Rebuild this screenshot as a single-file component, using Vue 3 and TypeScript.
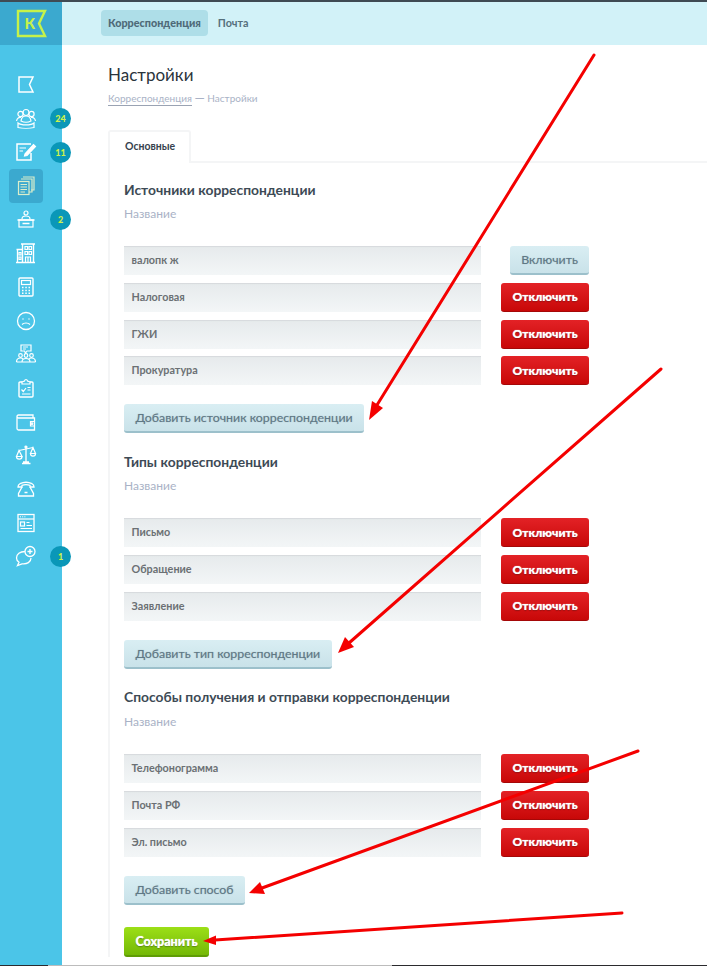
<script setup lang="ts">
interface Row { name: string; on: boolean }
interface Section { title: string; add: string; rows: Row[] }

const nav: { id: string; badge?: string; active?: boolean }[] = [
  { id: 'flag' },
  { id: 'people', badge: '24' },
  { id: 'edit', badge: '11' },
  { id: 'docs', active: true },
  { id: 'desk', badge: '2' },
  { id: 'building' },
  { id: 'calc' },
  { id: 'sad' },
  { id: 'meeting' },
  { id: 'clip' },
  { id: 'wallet' },
  { id: 'scales' },
  { id: 'phone' },
  { id: 'browser' },
  { id: 'chat', badge: '1' },
]

const sections: Section[] = [
  {
    title: 'Источники корреспонденции',
    add: 'Добавить источник корреспонденции',
    rows: [
      { name: 'валопк ж', on: false },
      { name: 'Налоговая', on: true },
      { name: 'ГЖИ', on: true },
      { name: 'Прокуратура', on: true },
    ],
  },
  {
    title: 'Типы корреспонденции',
    add: 'Добавить тип корреспонденции',
    rows: [
      { name: 'Письмо', on: true },
      { name: 'Обращение', on: true },
      { name: 'Заявление', on: true },
    ],
  },
  {
    title: 'Способы получения и отправки корреспонденции',
    add: 'Добавить способ',
    rows: [
      { name: 'Телефонограмма', on: true },
      { name: 'Почта РФ', on: true },
      { name: 'Эл. письмо', on: true },
    ],
  },
]

const arrows = [
  { x1: 594, y1: 55, x2: 377, y2: 405, head: '369,420 372,401 383,408' },
  { x1: 661, y1: 369, x2: 349, y2: 643, head: '338,653 345,637 354,647' },
  { x1: 638, y1: 751, x2: 262, y2: 888, head: '249,893 260,882 265,894' },
  { x1: 622, y1: 913, x2: 215, y2: 940, head: '203,941 216,935.500 216,945' },
]
</script>

<template>
  <div class="page">
    <div class="strip"></div>
    <div class="shell">
      <aside class="side">
        <div class="logo">
          <svg width="32" height="30" viewBox="0 0 32 30">
            <path d="M2 2H29L23 14.500L29 27H2Z" fill="none" stroke="#c6f24a" stroke-width="2.400" />
            <text x="8.500" y="19.500" class="logo-k">К</text>
          </svg>
        </div>
        <nav class="nav">
          <div v-for="item in nav" :key="item.id" class="nav-item">
            <span class="nav-icon" :class="{ active: item.active }">
              <svg width="22" height="22" viewBox="0 0 22 22" fill="none" :stroke="item.active ? '#dbeecb' : '#fff'" stroke-width="1.200">
                <template v-if="item.id === 'flag'">
                  <path d="M4 3H18L14.500 10.500L18 18H4Z" stroke-width="1.500" />
                </template>
                <template v-else-if="item.id === 'people'">
                  <circle cx="11" cy="4.500" r="3" /><circle cx="5.500" cy="6" r="2.600" /><circle cx="16.500" cy="6" r="2.600" />
                  <path d="M1.500 13C2 10 4 9 6 9.500M20.500 13C20 10 18 9 16 9.500M6 13C6.500 9 8.500 8 11 8S15.500 9 16 13C13 14.500 9 14.500 6 13Z" />
                  <path d="M3 15C6 17.500 16 17.500 19 15V19.500C15 20.500 7 20.500 3 19.500Z" />
                </template>
                <template v-else-if="item.id === 'edit'">
                  <path d="M16 3H2V19H16V12" stroke-width="1.500" />
                  <path d="M4.500 7H11M4.500 10H8" />
                  <path d="M10 13L18.500 3.500L20.500 5.500L12 14.500L9.500 15Z" fill="#fff" />
                </template>
                <template v-else-if="item.id === 'docs'">
                  <path d="M8 2H19V15H16M6 4H17V17H14" />
                  <rect x="3.500" y="6.500" width="10.500" height="13" />
                  <path d="M5.500 9.500H12M5.500 12H12M5.500 14.500H12M5.500 17H10" />
                </template>
                <template v-else-if="item.id === 'desk'">
                  <circle cx="11" cy="4" r="2" />
                  <path d="M7 10C7 7.500 9 7 11 7S15 7.500 15 10" />
                  <path d="M2.500 11H19.500" stroke-width="1.600" />
                  <rect x="4" y="11" width="14" height="7" />
                  <path d="M7.500 14.500H14.500" stroke-width="1.500" />
                </template>
                <template v-else-if="item.id === 'building'">
                  <path d="M6 2H20M7.500 2V20M18.500 2V20" stroke-width="1.400" />
                  <path d="M1.500 7.500H7.500M2.500 7.500V20M1 20.500H20" stroke-width="1.300" />
                  <path d="M10 4.500H12.500V7.500H10ZM14 4.500H16.500V7.500H14ZM10 9.500H12.500V12.500H10ZM14 9.500H16.500V12.500H14ZM4 10.500H6V13H4ZM4 15H6V17.500H4Z" />
                  <path d="M10.500 20V15H15.500V20M13 15V20" />
                </template>
                <template v-else-if="item.id === 'calc'">
                  <rect x="4" y="2" width="14" height="18" rx="1" stroke-width="1.400" />
                  <rect x="6.500" y="4.500" width="9" height="4" />
                  <path d="M7 11.500H8.500M10.300 11.500H11.800M13.500 11.500H15M7 14.500H8.500M10.300 14.500H11.800M13.500 14.500H15M7 17.300H8.500M10.300 17.300H11.800M13.500 17.300H15" stroke-width="1.500" />
                </template>
                <template v-else-if="item.id === 'sad'">
                  <circle cx="11" cy="11" r="8.500" stroke-width="1.300" />
                  <path d="M8 8.500V9.500M14 8.500V9.500" stroke-width="1.500" />
                  <path d="M7 14.500C9 12.500 13 12.500 15 14.500" />
                </template>
                <template v-else-if="item.id === 'meeting'">
                  <path d="M6 2H16V8H12L10.500 10L9.500 8H6Z" />
                  <path d="M8 4H13M8 6H11" stroke-width=".9" />
                  <circle cx="11" cy="12.500" r="1.800" /><circle cx="5.500" cy="12.500" r="1.800" /><circle cx="16.500" cy="12.500" r="1.800" />
                  <path d="M1.500 19C1.500 16 3 15 5.500 15C6.500 15 7.500 15.300 8 16M20.500 19C20.500 16 19 15 16.500 15C15.500 15 14.500 15.300 14 16M1.500 19H20.500M7 19C7 16.500 8.500 15.500 11 15.500S15 16.500 15 19" />
                </template>
                <template v-else-if="item.id === 'clip'">
                  <path d="M7 5H5C4.400 5 4 5.400 4 6V19C4 19.600 4.400 20 5 20H17C17.600 20 18 19.600 18 19V6C18 5.400 17.600 5 17 5H15" stroke-width="1.400" />
                  <path d="M7 7V5L9.500 4C10 2 12 2 12.500 4L15 5V7Z" />
                  <path d="M6.500 12.500L8.300 14.500L11 11M12.500 10.500H15.500M12.500 13H15.500M7 17H15.500" />
                </template>
                <template v-else-if="item.id === 'wallet'">
                  <path d="M18 7V4H3.500C2.500 4 2 4.700 2 5.500V17.500C2 18.300 2.500 19 3.500 19H19.500V7H3.500C2.700 7 2 6.300 2 5.500" stroke-width="1.300" />
                  <path d="M19.500 10.500H15.500V15H19.500" />
                  <circle cx="17" cy="12.700" r=".8" />
                </template>
                <template v-else-if="item.id === 'scales'">
                  <path d="M11 2V18M7 19.500H15.500M8 18H14" stroke-width="1.300" />
                  <path d="M4 6.500L11 5L18 3.500" />
                  <circle cx="11" cy="3" r="1" />
                  <path d="M4 6.500L1.500 12.500H7ZM18 3.500L15.500 9.500H20.500Z" />
                  <path d="M1.500 12.500C1.500 16 7 16 7 12.500M15.500 9.500C15.500 13 20.500 13 20.500 9.500" />
                </template>
                <template v-else-if="item.id === 'phone'">
                  <path d="M3 9C3 7.500 3.500 6.500 5 5.700C8.500 4 13.500 4 17 5.700C18.500 6.500 19 7.500 19 9H15V7.300C13 6.700 9 6.700 7 7.300V9Z" stroke-width="1.300" />
                  <path d="M7 9L3.500 15.500V18H18.500V15.500L15 9" stroke-width="1.300" />
                  <path d="M9.500 14.500H12.500" stroke-width="1.500" />
                </template>
                <template v-else-if="item.id === 'browser'">
                  <rect x="3" y="2.500" width="16" height="17" stroke-width="1.300" />
                  <path d="M3 7H19" />
                  <path d="M5 4.800H6M7.200 4.800H8.200M9.400 4.800H10.400" stroke-width="1" />
                  <rect x="5.500" y="10" width="4" height="4" />
                  <path d="M11.500 10.500H14.500M11.500 13.500H17M5.500 16.500H17" stroke-width="1" />
                </template>
                <template v-else-if="item.id === 'chat'">
                  <path d="M10 6.500C5 6.500 1.500 9 1.500 13C1.500 15 2.500 16.300 4 17.300L2.500 20.500L7 18.800C12 19.500 16 17 16 13" stroke-width="1.300" />
                  <circle cx="15" cy="6.500" r="5" fill="#4bc5e8" stroke-width="1.300" />
                  <path d="M15 4V9M12.500 6.500H17.500" stroke-width="1.400" />
                </template>
              </svg>
            </span>
            <span v-if="item.badge" class="badge">{{ item.badge }}</span>
          </div>
        </nav>
      </aside>

      <div class="main">
        <header class="top">
          <a class="top-link current">Корреспонденция</a>
          <a class="top-link">Почта</a>
        </header>
        <div class="content">
          <h1 class="title">Настройки</h1>
          <div class="crumbs"><span class="crumb-link">Корреспонденция</span> <span class="dash">—</span> Настройки</div>
          <div class="tab">Основные</div>
          <div class="panel">
            <section v-for="s in sections" :key="s.title" class="section">
              <h2 class="heading">{{ s.title }}</h2>
              <div class="label">Название</div>
              <div class="rows">
                <div v-for="r in s.rows" :key="r.name" class="row">
                  <div class="field">{{ r.name }}</div>
                  <div class="actions">
                    <button v-if="r.on" class="btn red">Отключить</button>
                    <button v-else class="btn blue enable">Включить</button>
                  </div>
                </div>
              </div>
              <button class="btn blue add">{{ s.add }}</button>
            </section>
            <button class="btn green">Сохранить</button>
          </div>
        </div>
      </div>
    </div>
    <div class="taskbar"><span class="task-active"></span></div>

    <svg class="arrows" width="707" height="966" viewBox="0 0 707 966">
      <g v-for="(a, i) in arrows" :key="i">
        <line :x1="a.x1" :y1="a.y1" :x2="a.x2" :y2="a.y2" stroke="#f40000" stroke-width="3" stroke-linecap="round" />
        <polygon :points="a.head" fill="#f40000" />
      </g>
    </svg>
  </div>
</template>

<style>
html, body { margin: 0; background: #fff; }
</style>

<style scoped>
.page {
  position: relative;
  width: 707px;
  height: 966px;
  overflow: hidden;
  display: flex;
  flex-direction: column;
  font-family: Lato, "Noto Sans", "Open Sans", sans-serif;
  color: #3d4a55;
}
.strip { height: 2px; background: #3f4a53; flex: none; }
.shell { flex: 1; display: flex; min-height: 0; }
.taskbar { height: 1px; flex: none; background: #2b2b2e; padding-left: 48px; display: flex; }
.task-active { width: 344px; background: #bcbcbc; }

.side { width: 62px; flex: none; background: #4bc5e8; display: flex; flex-direction: column; }
.logo { height: 43px; background: #3ba9cf; display: flex; align-items: center; justify-content: center; }
.logo svg { margin-left: 1px; }
.logo-k { font: 900 15px Lato, "Noto Sans", sans-serif; fill: #c6f24a; }
.nav { padding-top: 23px; }
.nav-item { position: relative; height: 33.7px; display: flex; align-items: center; padding-left: 9px; }
.nav-icon { width: 34px; height: 34px; display: flex; align-items: center; justify-content: center; border-radius: 4px; flex: none; }
.nav-icon.active { background: #3ba9cf; }
.badge {
  position: absolute;
  left: 50px;
  top: 50%;
  margin-top: -10.500px;
  width: 21px;
  height: 21px;
  border-radius: 50%;
  background: #0a97b8;
  color: #cdf24a;
  font-size: 9px;
  font-weight: 900;
  line-height: 21px;
  text-align: center;
}

.main { flex: 1; min-width: 0; display: flex; flex-direction: column; }
.top { height: 43px; background: #d2f2f8; display: flex; align-items: center; padding: 0 0 1px 39px; box-sizing: border-box; gap: 3px; flex: none; }
.top-link { font-size: 10.800px; font-weight: 700; color: #56707c; padding: 0 7px; height: 26px; line-height: 25px; border-radius: 4px; }
.top-link.current { background: #aedee8; font-weight: 900; color: #4e6a78; }

.content { padding: 0 0 0 46px; }
.title { margin: 19px 0 0; font-size: 17px; font-weight: 400; line-height: 21px; color: #2a343c; }
.crumbs { margin-top: 6px; font-size: 10px; line-height: 14px; color: #a9b2c6; }
.crumb-link { border-bottom: 1px solid #9aa3b3; padding-bottom: 1px; }
.dash { font-size: 13px; line-height: 12px; color: #a9b2c6; vertical-align: -1px; }

.tab {
  margin-top: 25px;
  width: 83px;
  height: 33px;
  box-sizing: border-box;
  border: 2px solid #f4f5f6;
  border-bottom: 0;
  border-radius: 3px 3px 0 0;
  background: #fff;
  position: relative;
  z-index: 1;
  margin-bottom: -2px;
  padding-left: 15px;
  font-size: 10.500px;
  font-weight: 700;
  line-height: 29px;
  color: #36424e;
}
.panel { border-left: 2px solid #f4f5f6; border-top: 2px solid #f4f5f6; padding: 16.500px 0 0 14px; }
.section { margin-bottom: 18.500px; }
.heading { margin: 0; font-size: 13.850px; font-weight: 700; line-height: 20px; color: #3d4a55; }
.label { margin-top: 7.500px; font-size: 12px; line-height: 14px; color: #a9b2c6; }
.rows { margin-top: 25px; display: flex; flex-direction: column; gap: 7.800px; }
.row { display: flex; height: 29px; }
.field {
  width: 357px;
  box-sizing: border-box;
  padding-left: 7.500px;
  background: linear-gradient(#e6eaec, #f3f6f7);
  box-shadow: inset 0 2px 1px -1px #d6dadd;
  font-size: 10.800px;
  font-weight: 700;
  line-height: 28px;
  color: #6b7074;
}
.actions { width: 108px; display: flex; justify-content: flex-end; }
.btn {
  display: block;
  box-sizing: border-box;
  border: 0;
  border-radius: 3px;
  height: 29px;
  padding: 0;
  font-family: inherit;
  line-height: 27px;
  text-align: center;
}
.red {
  width: 88px;
  background: linear-gradient(#e32226, #c80808);
  border-bottom: 1px solid #a50808;
  color: #fff;
  font-size: 12px;
  font-weight: 900;
  text-shadow: 0 0 1px rgba(255, 255, 255, .8), 0 1px 1px #8a0000;
}
.blue {
  background: linear-gradient(#d9eef3, #c9e2e9);
  border-bottom: 2px solid #9cc0cb;
  color: #5f7885;
  font-weight: 400;
  font-size: 12.350px;
  text-shadow: 0 0 1px rgba(95, 120, 133, .5);
}
.enable { width: 79px; }
.add { margin-top: 19px; padding: 0 11.500px; }
.green {
  margin-top: 22.500px;
  width: 85px;
  height: 30px;
  background: linear-gradient(#9cdf17, #74b806);
  border-bottom: 2px solid #5f9c05;
  color: #fff;
  font-weight: 900;
  font-size: 12.500px;
  text-shadow: 0 0 1px rgba(255, 255, 255, .8), 0 1px 1px #4b7d00;
}
.arrows { position: absolute; left: 0; top: 0; pointer-events: none; }
</style>
